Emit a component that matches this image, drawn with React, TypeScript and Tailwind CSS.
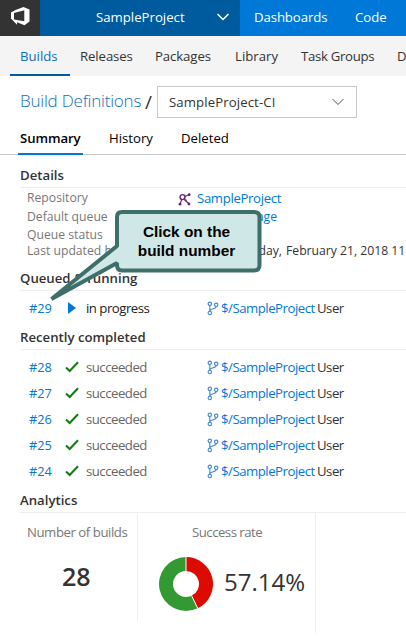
import type { ReactNode } from "react";

const builds = ["#28", "#27", "#26", "#25", "#24"];

function Chevron({ className }: { className: string }) {
  return (
    <svg width="14" height="8" viewBox="0 0 14 8" fill="none" stroke="currentColor" className={className}>
      <path d="M1.500 1 L7 6.500 L12.500 1" />
    </svg>
  );
}

function Logo() {
  return (
    <svg width="40" height="36" viewBox="0 0 40 36" className="shrink-0 bg-[#333333]">
      <path
        fill="#fff"
        fillRule="evenodd"
        d="M15.500 10 L23.500 7 L29.500 9.500 V21.500 L24.500 25.200 L17 22.300 V24.800 L11 18.500 V12.500 Z M24.300 10.200 L14 13 V19.500 L24.300 21.300 Z"
      />
    </svg>
  );
}

function Branch() {
  return (
    <svg width="12" height="15" viewBox="0 0 12 15" fill="none" stroke="#3d86d8" strokeWidth="1.100" className="shrink-0">
      <circle cx="2.800" cy="2.800" r="1.700" />
      <circle cx="9.200" cy="3.800" r="1.700" />
      <circle cx="2.800" cy="12" r="1.700" />
      <path d="M2.800 4.500 V10.300 M9.200 5.500 C9.200 8.500 3.500 7 2.800 10" />
    </svg>
  );
}

function Repo() {
  return (
    <svg width="13" height="13" viewBox="0 0 13 13" fill="none" stroke="#68217a" strokeWidth="1.100" className="mt-0.5 shrink-0">
      <circle cx="4.500" cy="4.100" r="2.500" strokeWidth="1.400" />
      <path d="M7 3.400 L11 1.600 M6.400 6.300 L11 11 M3.600 7 L2 11" />
      <g fill="#68217a" stroke="none">
        <circle cx="11.200" cy="1.700" r="1.400" />
        <circle cx="11" cy="11" r="1.400" />
        <circle cx="2" cy="11.200" r="1.400" />
        <circle cx="7.600" cy="7.300" r="1.100" />
      </g>
    </svg>
  );
}

function Section({ title, className }: { title: string; className: string }) {
  return (
    <h2 className={`ml-5 flex items-start border-b border-[#eeeeee] text-[13.2px] font-semibold leading-[18px] text-[#333333] ${className}`}>
      {title}
    </h2>
  );
}

function BuildRow({ id, status, icon, active }: { id: string; status: string; icon: ReactNode; active?: boolean }) {
  return (
    <div className="flex h-[26px] items-center pl-[29px]">
      <a className="w-9 text-[12.8px] text-[#0078d7]">{id}</a>
      <span className="flex w-[21px] shrink-0">{icon}</span>
      <span className={`w-[121px] shrink-0 ${active ? "tracking-[-0.5px] text-[#222222]" : "tracking-[-0.5px] text-[#666666]"}`}>{status}</span>
      <Branch />
      <a className="ml-0.5 w-[96px] shrink-0 tracking-[-0.48px] text-[#0078d7]">$/SampleProject</a>
      <span className="tracking-[-0.5px] text-[#333333]">User</span>
    </div>
  );
}

function Donut() {
  return (
    <svg width="54" height="54" viewBox="-27 -27 54 54" className="shrink-0">
      <path fill="#dc0a00" d="M0 -27 A27 27 0 0 1 11.72 24.33 L5.64 11.71 A13 13 0 0 0 0 -13 Z" />
      <path fill="#339933" d="M11.72 24.33 A27 27 0 1 1 0 -27 L0 -13 A13 13 0 1 0 5.64 11.71 Z" />
      <path stroke="#fff" d="M0 -27 V-13 M11.72 24.33 L5.64 11.71" />
    </svg>
  );
}

function Callout() {
  return (
    <div className="absolute left-[48px] top-[209px] h-[94px] w-[216px]">
      <svg width="216" height="94" viewBox="48 209 216 94" className="absolute inset-0">
        <path
          d="M122 212 H254 Q259.500 212 259.500 217 V265 Q259.500 270.500 254 270.500 H122 Q117 270.500 117 265 V263 L51.500 299 L117 246 V217 Q117 212 122 212 Z"
          fill="#cfe7e6"
          stroke="#3f6f6b"
          strokeWidth="4"
          strokeLinejoin="bevel"
        />
      </svg>
      <p className="relative ml-[65px] w-[147px] pt-[13px] text-center font-['Liberation_Sans',sans-serif] text-[15.4px] font-bold leading-[19px] text-black">
        Click on the
        <br />
        build number
      </p>
    </div>
  );
}

export default function App() {
  const check = (
    <svg width="14" height="12" viewBox="0 0 14 12" fill="none" stroke="#107c10" strokeWidth="2">
      <path d="M1 6.500 L4.700 10 L13 1.200" />
    </svg>
  );
  const play = (
    <svg width="10" height="12" viewBox="0 0 10 12" className="ml-[3px]">
      <path fill="#0078d7" d="M0 0 L8 6 L0 12 Z" />
    </svg>
  );

  return (
    <div className="relative h-[638px] w-[406px] overflow-hidden whitespace-nowrap bg-white font-['Open_Sans','Noto_Sans',sans-serif] text-[13.2px] leading-[18px]">
      <header className="flex h-9 bg-[#0078d7] text-white">
        <Logo />
        <div className="flex w-[200px] shrink-0 items-center bg-[#005a9e] pb-0.5 pl-14">
          <span className="w-[120px] font-medium">SampleProject</span>
          <Chevron className="stroke-[1.5]" />
        </div>
        <div className="flex items-center pb-0.5 pl-[14px] font-medium">
          <span className="w-[101px] tracking-[-0.1px]">Dashboards</span>
          <span>Code</span>
        </div>
      </header>

      <nav className="flex h-10 bg-[#f4f4f4] pl-2.5 text-[#333333]">
        <span className="flex w-[60px] shrink-0 items-center border-b-2 border-[#005a9e] pl-2.5 pt-0.5 text-[#106ebe]">Builds</span>
        <span className="flex w-[75px] shrink-0 items-center pl-[10px] tracking-[-0.1px]">Releases</span>
        <span className="flex w-[80px] shrink-0 items-center pl-[10px] tracking-[-0.1px]">Packages</span>
        <span className="flex w-[66px] shrink-0 items-center pl-[10px]">Library</span>
        <span className="flex w-[96px] shrink-0 items-center pl-[10px] tracking-[-0.3px]">Task Groups</span>
        <span className="flex items-center pl-[10px]">D</span>
      </nav>

      <div className="flex h-[47px] pl-5 pt-2.5">
        <span className="w-[125px] text-[17px] font-light leading-[30px] tracking-[-0.2px] text-[#106ebe]">Build Definitions</span>
        <span className="w-3 text-[19px] leading-[32px] text-[#333333]">/</span>
        <div className="flex h-8 w-[200px] items-center justify-between border border-[#c8c8c8] pl-[11px] pr-[11px] text-[#333333]">
          <span className="tracking-[0.1px]">SampleProject-CI</span>
          <Chevron className="text-[#555555]" />
        </div>
      </div>

      <div className="flex h-[32px] text-black">
        <div className="w-[18px] border-b border-[#c8c8c8]" />
        <span className="w-[65px] border-b-2 border-[#0078d7] pl-0.5 pt-[6px] font-semibold tracking-[-0.1px]">Summary</span>
        <div className="flex grow border-b border-[#c8c8c8] pl-[26px] pt-[6px]">
          <span className="w-[72px]">History</span>
          <span>Deleted</span>
        </div>
      </div>

      <Section title="Details" className="mt-[11px] h-[22px]" />
      <div className="pl-[27px] text-[12.2px] text-[#777777]">
        <div className="flex h-[20px] items-center">
          <span className="w-[151px]">Repository</span>
          <Repo />
          <a className="ml-[6px] text-[13.2px] font-medium tracking-[-0.35px] text-[#0078d7]">SampleProject</a>
        </div>
        <div className="flex h-[18px] items-center">
          <span className="w-[151px]">Default queue</span>
          <a className="w-[99px] text-right text-[#0078d7]">Hosted Storage</a>
        </div>
        <div className="flex h-[17px] items-center">Queue status</div>
        <div className="flex h-[16px] items-center">
          <span className="w-[151px] shrink-0">Last updated by</span>
          <span className="w-[104px] shrink-0 text-right text-[#333333]">Wednesday,</span>
          <span className="ml-1 shrink-0 text-[#333333]">February 21, 2018 11</span>
        </div>
      </div>

      <Section title="Queued & running" className="mt-[10px] h-[22px]" />
      <div className="pt-1">
        <BuildRow id="#29" status="in progress" icon={play} active />
      </div>

      <Section title="Recently completed" className="mt-[7px] h-[22px]" />
      <div className="pt-1">
        {builds.map((id) => (
          <BuildRow key={id} id={id} status="succeeded" icon={check} />
        ))}
      </div>

      <Section title="Analytics" className="mt-[7px] h-[22px]" />
      <div className="ml-5 flex items-start">
        <div className="h-[108px] w-[118px] border-r border-[#eeeeee] pt-[10px] text-[#777777]">
          <p className="pl-[7px] tracking-[-0.45px]">Number of builds</p>
          <p className="mt-[18px] pl-[42px] text-[25px] font-semibold leading-[34px] text-[#333333]">28</p>
        </div>
        <div className="h-[120px] w-[178px] border-r border-[#eeeeee] pt-[10px] text-[#777777]">
          <p className="pl-[54px] tracking-[-0.5px]">Success rate</p>
          <div className="mt-4 flex items-start pl-[21px]">
            <Donut />
            <p className="ml-[11px] mt-[8px] text-[24px] font-medium leading-[34px] text-[#333333]">57.14%</p>
          </div>
        </div>
      </div>

      <Callout />
    </div>
  );
}
